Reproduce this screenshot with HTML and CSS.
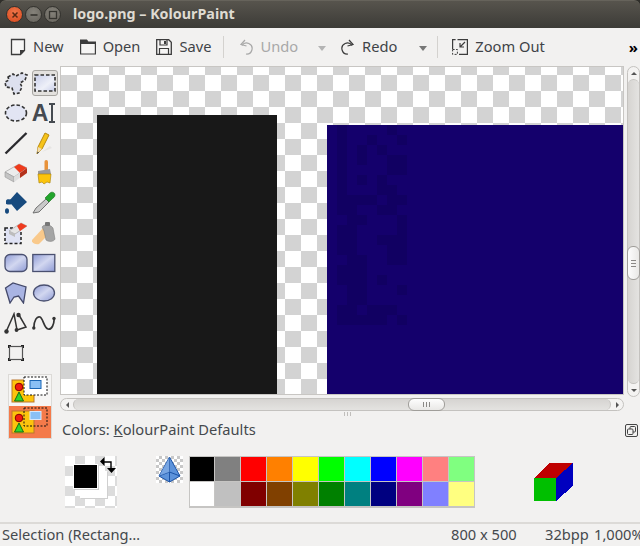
FILE: index.html
```html
<!DOCTYPE html>
<html lang="en">
<head>
<meta charset="utf-8">
<title>logo.png – KolourPaint</title>
<link rel="stylesheet" href="styles.css">
</head>
<body>
<div class="window">
  <header class="titlebar">
    <div class="wm-buttons">
      <span class="wm wm-close"><svg width="10" height="10" viewBox="0 0 10 10"><path d="M2.500 2.500l5 5M7.500 2.500l-5 5" stroke="#5a2a14" stroke-width="1.500"/></svg></span>
      <span class="wm"><svg width="10" height="10" viewBox="0 0 10 10"><path d="M1.500 5h7" stroke="#35342f" stroke-width="1.600"/></svg></span>
      <span class="wm"><svg width="10" height="10" viewBox="0 0 10 10"><rect x="1.500" y="1.500" width="7" height="7" fill="none" stroke="#35342f" stroke-width="1.300"/></svg></span>
    </div>
    <div class="title">logo.png – KolourPaint</div>
  </header>

  <nav class="toolbar">
    <button class="tb tb-new"><svg width="16" height="18" viewBox="0 0 16 18"><path d="M1.500 1.500h13v11l-4 4h-9z" fill="#f6f5f4" stroke="#3c3c3c" stroke-width="1.300"/><path d="M15 12l-5 5v-5z" fill="#3c3c3c"/></svg><span>New</span></button>
    <button class="tb tb-open"><svg width="16" height="16" viewBox="0 0 16 16"><path d="M.6 1h6l1.500 2h7.300v12H.6z" fill="#f6f5f4" stroke="#3c3c3c" stroke-width="1.200"/><path d="M.6 1h6l1.500 2h7.300v2H.6z" fill="#3c3c3c"/></svg><span>Open</span></button>
    <button class="tb tb-save"><svg width="16" height="16" viewBox="0 0 16 16"><path d="M.7.7h12l2.600 2.600v12H.7z" fill="#f6f5f4" stroke="#3c3c3c" stroke-width="1.300"/><path d="M4 1v5h7V1M3.500 15V9.500h9V15" fill="none" stroke="#3c3c3c" stroke-width="1.200"/><rect x="8" y="2" width="2" height="3" fill="#3c3c3c"/></svg><span>Save</span></button>
    <i class="tb-sep tb-sep1"></i>
    <button class="tb tb-undo dim"><svg width="14" height="16" viewBox="0 0 14 16"><path d="M3 6.500A5.500 5.500 0 1 1 7 15" fill="none" stroke="#a8a8a8" stroke-width="1.200"/><path d="M6 1L2 5.500 7.500 7" fill="none" stroke="#a8a8a8" stroke-width="1.200"/></svg><span>Undo</span></button>
    <i class="caret caret-dim caret-undo"></i>
    <button class="tb tb-redo"><svg width="14" height="16" viewBox="0 0 14 16"><path d="M11 6.500A5.500 5.500 0 1 0 7 15" fill="none" stroke="#3c3c3c" stroke-width="1.200"/><path d="M8 1l4 4.500L6.500 7" fill="none" stroke="#3c3c3c" stroke-width="1.200"/></svg><span>Redo</span></button>
    <i class="caret caret-redo"></i>
    <i class="tb-sep tb-sep2"></i>
    <button class="tb tb-zoom"><svg width="16" height="16" viewBox="0 0 16 16"><path d="M5.500.6h9.900v14.800H7M.6 10V.6h3" fill="none" stroke="#3c3c3c" stroke-width="1.200"/><path d="M.6 10.500h4.800v4.900H.6z" fill="none" stroke="#3c3c3c" stroke-dasharray="2 1.500"/><path d="M13 3L8 8M8 4v4h4" fill="none" stroke="#3c3c3c" stroke-width="1.200"/></svg><span>Zoom Out</span></button>
    <span class="more">»</span>
  </nav>

  <main class="workspace">
    <aside class="toolbox">
      <div class="tool"><svg width="24" height="23" viewBox="0 0 24 23"><path d="M4 5l5-3 3 2 6-3 5 2-2 5-5 3 2 4-3 6-5 1-2-6-6-1-1-5 4-2z" fill="#dde0ee" stroke="#333" stroke-width="1.600" stroke-dasharray="3 1.800"/></svg></div>
      <div class="tool is-active"><svg width="22" height="18" viewBox="0 0 22 18"><defs><linearGradient id="g1" x1="0" y1="0" x2="1" y2="1"><stop offset="0" stop-color="#c9cfea"/><stop offset=".6" stop-color="#eef0f8"/><stop offset="1" stop-color="#c9cfea"/></linearGradient></defs><rect x="1" y="1" width="20" height="16" fill="url(#g1)" stroke="#333" stroke-width="1.600" stroke-dasharray="3.500 2"/></svg></div>

      <div class="tool"><svg width="24" height="20" viewBox="0 0 24 20"><ellipse cx="12" cy="10" rx="10.500" ry="8" fill="#e2e5f3" stroke="#333" stroke-width="1.600" stroke-dasharray="3.500 2"/></svg></div>
      <div class="tool tool-text"><span class="glyph-a">A</span><svg width="8" height="20" viewBox="0 0 8 20"><path d="M1 1h6M4 1v18M1 19h6" fill="none" stroke="#454a50" stroke-width="2"/></svg></div>

      <div class="tool"><svg width="24" height="24" viewBox="0 0 24 24"><path d="M1.500 22.500L22.500 2" stroke="#2a2a2e" stroke-width="2.400"/></svg></div>
      <div class="tool"><svg width="20" height="24" viewBox="0 0 20 24"><path d="M18 17l-10 4 8-6z" fill="#e6e5e3"/><path d="M3 23l1-7L11 2l4 2-7 14z" fill="#f6c319" stroke="#b88a10"/><path d="M3 23l1-7 4 2z" fill="#f1dcb2"/><path d="M3 23l.5-2.500 1.500 1z" fill="#333"/></svg></div>

      <div class="tool"><svg width="24" height="20" viewBox="0 0 24 20"><path d="M1 9L15 1l8 4-13 9z" fill="#ececec" stroke="#aaa" stroke-width=".8"/><path d="M10 4l5-3 8 4-7 5z" fill="#ee3b1c"/><path d="M1 9l9 5v5l-9-5z" fill="#c4c4c4" stroke="#999" stroke-width=".6"/><path d="M10 14L23 5v5L10 19z" fill="#dedede"/><path d="M16 10l7-5v5l-7 5z" fill="#b4321c"/></svg></div>
      <div class="tool"><svg width="16" height="26" viewBox="0 0 16 26"><rect x="8.500" y="0" width="3.500" height="11" rx="1.700" fill="#e8923a"/><path d="M2 11l12-2 1 5H2z" fill="#9a9a9a"/><path d="M2 14h13l-1 9-3-1-3 2-2-2-3 1z" fill="#fbc40c" stroke="#a67d06" stroke-width=".6"/></svg></div>

      <div class="tool"><svg width="22" height="22" viewBox="0 0 22 22"><path d="M4 9l8-9 10 10-10 9-5-6c-2-2-2-3-3-4z" fill="#174a7e"/><path d="M8 8C4 7 1 7 1 9v3c3 1 6 1 7-2z" fill="#174a7e"/><ellipse cx="2" cy="19" rx="2" ry="2.800" fill="#174a7e"/></svg></div>
      <div class="tool"><svg width="24" height="24" viewBox="0 0 24 24"><path d="M1 22l3-5L14 8l3 3-10 10z" fill="#c9c9c9" stroke="#666" stroke-width=".9"/><path d="M13 7l4-4c2-3 6-2 6 1 0 2-2 3-3 4l-3 3z" fill="#22a52c" stroke="#15701b" stroke-width=".6"/></svg></div>

      <div class="tool"><svg width="24" height="24" viewBox="0 0 24 24"><rect x="1" y="7" width="16" height="15.500" fill="#dfe2f3" stroke="#222" stroke-width="1.500" stroke-dasharray="3 2"/><path d="M5 10l12-8 6 3-12 8z" fill="#e5e5e5" stroke="#999" stroke-width=".6"/><path d="M13 5l4-3 6 3-7 5z" fill="#ef3b1f"/><path d="M5 10l6 3v3l-6-3z" fill="#bdbdbd"/></svg></div>
      <div class="tool"><svg width="24" height="24" viewBox="0 0 24 24"><path d="M12 6L0 19c-1 3 4 5 7 4l9-9z" fill="#f9c98b"/><path d="M10 6c2-3 8-3 11 1l2 11c-1 3-7 3-9 1L12 10z" fill="#a4a4a4" stroke="#777" stroke-width=".5"/><rect x="13" y="1" width="5" height="4" rx="1" fill="#777"/></svg></div>

      <div class="tool"><svg width="24" height="20" viewBox="0 0 24 20"><defs><linearGradient id="g2" x1="0" y1="0" x2="1" y2="1"><stop offset="0" stop-color="#8e9ad4"/><stop offset=".5" stop-color="#d2d7f0"/><stop offset="1" stop-color="#8e9ad4"/></linearGradient></defs><rect x="1" y="1.500" width="22" height="17" rx="5" fill="url(#g2)" stroke="#4a5070" stroke-width="1.300"/></svg></div>
      <div class="tool"><svg width="24" height="20" viewBox="0 0 24 20"><rect x=".8" y="1.500" width="22" height="17" fill="url(#g2)" stroke="#4a5070" stroke-width="1.300"/></svg></div>

      <div class="tool"><svg width="24" height="22" viewBox="0 0 24 22"><path d="M1.500 6L9 1l13 4-2.500 16-5-7-4.500 1-4 6z" fill="#a9b4e3" stroke="#44496a" stroke-width="1.300"/></svg></div>
      <div class="tool"><svg width="24" height="18" viewBox="0 0 24 18"><ellipse cx="12" cy="9" rx="10.500" ry="8" fill="url(#g2)" stroke="#4a5070" stroke-width="1.300"/></svg></div>

      <div class="tool"><svg width="24" height="22" viewBox="0 0 24 22"><path d="M2 20L10 2l3 16 9-3-7-12" fill="none" stroke="#333" stroke-width="1.500"/><circle cx="2.500" cy="19.500" r="2.200" fill="#333"/><circle cx="12.500" cy="18" r="1.900" fill="#333"/><circle cx="14.500" cy="3" r="2.200" fill="#333"/></svg></div>
      <div class="tool"><svg width="24" height="18" viewBox="0 0 24 18"><path d="M1.800 14C2 6 5 2 8 3s4 11 8 12 6-5 6.200-10" fill="none" stroke="#333" stroke-width="1.700"/><circle cx="1.800" cy="14" r="1.700" fill="#333"/><circle cx="22" cy="4.500" r="1.700" fill="#333"/></svg></div>

      <div class="tool"><svg width="16" height="16" viewBox="0 0 16 16"><rect x="1.500" y="1.500" width="13" height="13" fill="none" stroke="#555" stroke-width="1.200"/><path d="M0 0h3v1H1v2H0zM13 0h3v3h-1V1h-2zM0 13h1v2h2v1H0zM15 13h1v3h-3v-1h2z" fill="#222"/></svg></div>
      <div class="tool"></div>

      <div class="options">
        <div class="opt">
          <svg width="40" height="29" viewBox="0 0 40 29"><rect x="1" y="4" width="22" height="22" fill="#fdc40d" stroke="#b9772d"/><circle cx="8" cy="11" r="3.800" fill="#f01c10" stroke="#800"/><path d="M8 16l4.500 9h-9z" fill="#32d72c" stroke="#176b14"/><rect x="13" y="1" width="23" height="18" fill="#fff"/><rect x="13" y="1" width="23" height="18" fill="none" stroke="#111" stroke-dasharray="2 1.500"/><rect x="19" y="4.500" width="11" height="8" fill="#8ac0f5" stroke="#1a66b5"/></svg>
        </div>
        <div class="opt opt-on">
          <svg width="40" height="29" viewBox="0 0 40 29"><rect x="1" y="4" width="22" height="22" fill="#fdc40d" stroke="#b9772d"/><circle cx="8" cy="11" r="3.800" fill="#f01c10" stroke="#800"/><path d="M8 16l4.500 9h-9z" fill="#32d72c" stroke="#176b14"/><rect x="13" y="1" width="23" height="18" fill="none" stroke="#111" stroke-dasharray="2 1.500"/><rect x="19" y="4.500" width="11" height="8" fill="#8ac0f5" stroke="#d9e8fa"/></svg>
        </div>
      </div>
    </aside>

    <section class="viewport">
      <div class="viewport-row">
        <div class="canvas">
          <div class="img-black"></div>
          <div class="img-blue">
            <svg width="297" height="269" viewBox="0 0 29.700 26.900" shape-rendering="crispEdges"><path fill="#110062" d="M1 0h1v7H1zM6 0h1v1H6zM4 1h1v1H4zM7 1h1v1H7zM3 2h1v2H3zM5 2h1v1H5zM6 3h2v2H6zM3 5h1v1H3zM5 5h1v1H5zM5 6h2v1H5zM1 7h4v1H1zM6 7h2v1H6zM1 8h2v1H1zM5 8h2v1H5zM2 9h2v1H2zM7 9h1v1H7zM1 10h2v1H1zM7 10h1v1H7zM1 11h2v1H1zM5 11h3v1H5zM1 12h2v1H1zM6 12h2v2H6zM2 13h2v1H2zM1 14h3v2H1zM5 15h1v1H5zM2 16h2v2H2zM7 16h1v1H7zM1 18h2v1H1zM4 18h3v1H4zM1 19h5v1H1zM7 19h1v1H7z"/></svg>
          </div>
        </div>
        <div class="vscroll">
          <span class="arrow-btn"><i class="tri-up"></i></span>
          <div class="vtrack"><div class="vthumb"><i></i><i></i><i></i></div></div>
          <span class="arrow-btn arrow-btn-down"><i class="tri-down"></i></span>
        </div>
      </div>
      <div class="hscroll">
        <span class="harrow"><i class="tri-left"></i></span>
        <div class="htrack"><div class="hthumb"><i></i><i></i><i></i></div></div>
        <span class="harrow harrow-r"><i class="tri-right"></i></span>
      </div>
      <div class="grip"><i></i><i></i><i></i></div>
    </section>
  </main>

  <section class="colors">
    <div class="colors-head">
      <span class="colors-label">Colors: <u>K</u>olourPaint Defaults</span>
      <svg class="dock" width="13" height="13" viewBox="0 0 13 13"><rect x=".5" y=".5" width="12" height="12" rx="1.500" fill="none" stroke="#444"/><rect x="5" y="2.500" width="5.500" height="5.500" rx="1" fill="none" stroke="#444"/><rect x="2.500" y="5" width="5.500" height="5.500" rx="1" fill="#f2f1f0" stroke="#444"/></svg>
    </div>
    <div class="colors-body">
      <div class="fgbg">
        <div class="bg-swatch"></div>
        <div class="fg-swatch"></div>
        <svg class="swap" width="16" height="17" viewBox="0 0 16 17"><path d="M3 5h8v7" fill="none" stroke="#000" stroke-width="1.400"/><path d="M0 4.500L4.500 0v9zM7 11h9l-4.500 5z" fill="#000"/></svg>
      </div>
      <div class="cone">
        <svg width="27" height="27" viewBox="0 0 27 27"><path d="M13.500 1L3 20l10.500 6L24 20z" fill="#5d93db" stroke="#1b53a7"/><path d="M13.500 1v25M3 20l10.500-4 10.500 4" fill="none" stroke="#1b53a7"/><path d="M13.500 1L3 20l10.500-4z" fill="#8ab2e8" opacity=".6"/></svg>
      </div>
      <div class="palette">
        <i style="background:#000000"></i><i style="background:#808080"></i><i style="background:#ff0000"></i><i style="background:#ff8000"></i><i style="background:#ffff00"></i><i style="background:#00ff00"></i><i style="background:#00ffff"></i><i style="background:#0000ff"></i><i style="background:#ff00ff"></i><i style="background:#ff8080"></i><i style="background:#80ff80"></i>
        <i style="background:#ffffff"></i><i style="background:#c0c0c0"></i><i style="background:#800000"></i><i style="background:#804000"></i><i style="background:#808000"></i><i style="background:#008000"></i><i style="background:#008080"></i><i style="background:#000080"></i><i style="background:#800080"></i><i style="background:#8080ff"></i><i style="background:#ffff80"></i>
      </div>
      <svg class="cube" width="39" height="39" viewBox="0 0 39 39" shape-rendering="crispEdges"><path d="M15 0h24L22 15H0z" fill="#bf0000"/><path d="M0 15h22v23H0z" fill="#00bf00"/><path d="M22 15L39 0v23L22 38z" fill="#0000bf"/></svg>
    </div>
  </section>

  <footer class="status">
    <span class="st-msg">Selection (Rectang…</span>
    <span class="st-size">800 x 500</span>
    <span class="st-bpp">32bpp</span>
    <span class="st-zoom">1,000%</span>
  </footer>
</div>
</body>
</html>
```

FILE: styles.css
```css
* { box-sizing: border-box; }
html, body { margin: 0; padding: 0; height: 100%; background: #f2f1f0; overflow: hidden; }
body { font-family: "Noto Sans", "Open Sans", sans-serif; font-size: 14.67px; color: #3c3c3c; }
.window { width: 640px; height: 546px; display: flex; flex-direction: column; overflow: hidden; background: #2f2e2a; }

.titlebar { height: 28px; flex: none; display: flex; align-items: center; padding-left: 6px; background: linear-gradient(#57544d, #3c3b37); border-radius: 6px 6px 0 0; border-top: 1px solid #66635b; }
.wm-buttons { display: flex; gap: 2px; }
.wm { width: 17px; height: 17px; border-radius: 50%; background: radial-gradient(circle at 50% 35%, #85827a, #65625b); border: 1px solid #33322e; display: flex; align-items: center; justify-content: center; }
.wm-close { background: radial-gradient(circle at 50% 35%, #f0764a, #d8481c); }
.title { margin-left: 12px; padding-bottom: 2px; color: #dfdbd2; font-weight: 700; font-size: 14.3px; white-space: nowrap; }

.toolbar { height: 38px; flex: none; background: #f2f1f0; display: flex; align-items: center; padding-left: 10px; }
.tb { border: 0; background: none; padding: 0; font: inherit; color: #3f4347; display: flex; align-items: center; gap: 7px; }
.tb span { padding-bottom: 2px; }
.tb-open { margin-left: 16px; }
.tb-save { margin-left: 16px; }
.tb-sep { width: 1px; height: 22px; background: #d4d2cf; flex: none; }
.tb-sep1 { margin-left: 12px; }
.tb-undo { margin-left: 15px; }
.dim { color: #a8a8a8; }
.caret { width: 0; height: 0; border-left: 4px solid transparent; border-right: 4px solid transparent; border-top: 5px solid #777; margin-top: 2px; flex: none; }
.caret-dim { border-top-color: #b4b4b4; margin-left: 20px; }
.tb-redo { margin-left: 15px; }
.caret-redo { margin-left: 22px; }
.tb-sep2 { margin-left: 10px; }
.tb-zoom { margin-left: 14px; }
.more { margin-left: auto; margin-right: 2px; font-size: 15px; font-weight: 700; color: #000; line-height: 1; }

.workspace { flex: none; height: 356px; display: flex; background: #f2f1f0; }
.toolbox { width: 60px; flex: none; position: relative; z-index: 1; display: grid; grid-template-columns: 28px 28px; grid-auto-rows: 30px; padding: 2px 0 0 2px; align-content: start; }
.tool { width: 28px; height: 30px; display: flex; align-items: center; justify-content: center; }
.is-active { width: 26px; height: 26px; margin: 2px 0 0 2px; background: #e3e1de; border: 1px solid #a8a6a2; border-radius: 3px; }
.glyph-a { font-family: "Liberation Sans", sans-serif; font-weight: 700; font-size: 23px; color: #454a50; line-height: 1; }
.options { grid-column: 1 / 3; width: 44px; height: 65px; margin: 6px 0 0 6px; border: 1px solid #dcdad7; background: #f6f5f4; }
.opt { height: 31px; padding: 1px 0 0 2px; }
.opt-on { height: 32px; background: #f47a4a; }

.viewport { width: 580px; flex: none; display: flex; flex-direction: column; }
.viewport-row { display: flex; height: 329px; align-items: flex-start; }
.canvas { width: 564px; height: 329px; flex: none; position: relative; border: 1px solid #c8c6c3; background-color: #fff; background-image: repeating-conic-gradient(#d3d3d3 0 25%, #fff 0 50%); background-size: 32px 32px; background-position: 0 -8px; overflow: hidden; }
.img-black { position: absolute; left: 36px; top: 48px; width: 180px; height: 290px; background: #181818; }
.img-blue { position: absolute; left: 266px; top: 58px; width: 297px; height: 280px; background: #14006c; }
.img-blue svg { display: block; }

.vscroll { width: 13px; flex: none; margin-left: 3px; height: 331px; display: flex; flex-direction: column; align-items: center; border: 1px solid #c4c2bf; border-radius: 7px; background: #f4f3f2; }
.arrow-btn { height: 12px; width: 100%; flex: none; display: flex; align-items: center; justify-content: center; }
.tri-up, .tri-down, .tri-left, .tri-right { display: block; width: 0; height: 0; }
.tri-up { border-left: 3px solid transparent; border-right: 3px solid transparent; border-bottom: 3px solid #555; }
.tri-down { border-left: 3px solid transparent; border-right: 3px solid transparent; border-top: 3px solid #555; }
.vtrack { flex: 1; width: 100%; background: linear-gradient(90deg, #d6d4d1, #e4e3e1); border-radius: 6px; border: 1px solid #c4c2bf; border-width: 1px 0; padding-top: 166px; }
.vthumb { height: 34px; width: 13px; background: linear-gradient(90deg, #fdfdfd, #e9e8e6); border: 1px solid #a09e9a; border-radius: 6px; display: flex; flex-direction: column; gap: 2px; align-items: center; justify-content: center; margin: 0 -1px; }
.vthumb i { display: block; width: 5px; height: 1px; background: #8a8885; }

.hscroll { width: 564px; height: 13px; margin-top: 3px; display: flex; align-items: center; border: 1px solid #c4c2bf; border-radius: 7px; background: #f4f3f2; }
.harrow { width: 12px; height: 100%; flex: none; display: flex; align-items: center; justify-content: center; }
.tri-left { border-top: 3px solid transparent; border-bottom: 3px solid transparent; border-right: 3px solid #555; }
.tri-right { border-top: 3px solid transparent; border-bottom: 3px solid transparent; border-left: 3px solid #555; }
.htrack { flex: 1; height: 100%; background: linear-gradient(#d6d4d1, #e4e3e1); border-radius: 6px; border: 1px solid #c4c2bf; border-width: 0 1px; padding-left: 334px; }
.hthumb { width: 37px; height: 13px; margin-top: -1px; background: linear-gradient(#fdfdfd, #e9e8e6); border: 1px solid #a09e9a; border-radius: 6px; display: flex; gap: 2px; align-items: center; justify-content: center; }
.hthumb i { display: block; width: 1px; height: 5px; background: #8a8885; }
.grip { display: flex; gap: 2px; justify-content: center; margin-top: 1px; margin-left: -6px; }
.grip i { display: block; width: 1px; height: 4px; background: #c0bebb; }

.colors { flex: none; height: 100px; background: #f2f1f0; }
.colors-head { height: 34px; display: flex; align-items: flex-start; justify-content: space-between; padding: 0 2px 0 62px; }
.colors-label { color: #45494d; white-space: nowrap; line-height: 14px; }
.dock { margin-top: 2px; }
.colors-body { display: flex; align-items: flex-start; padding: 0 0 0 65px; }
.fgbg { width: 52px; height: 52px; flex: none; position: relative; background-color: #fff; background-image: repeating-conic-gradient(#dcdcdc 0 25%, #fff 0 50%); background-size: 20px 20px; }
.bg-swatch { position: absolute; left: 15px; top: 15px; width: 27px; height: 27px; background: #fff; box-shadow: 1px 1px 0 #d0d0d0; }
.fg-swatch { position: absolute; left: 8px; top: 8px; width: 25px; height: 25px; background: #000; border: 1px solid #fff; box-shadow: 1px 1px 0 #d0d0d0; }
.swap { position: absolute; right: 1px; top: 1px; }
.cone { width: 27px; height: 27px; flex: none; margin-left: 39px; background-image: repeating-conic-gradient(#c8c8c8 0 25%, #fff 0 50%); background-size: 6px 6px; }
.palette { width: 286px; height: 52px; flex: none; margin-left: 6px; display: grid; grid-template-columns: 25px repeat(10, 26px); grid-auto-rows: 25px; background: #c6c5c3; padding: 1px 0 0 1px; }
.palette i { display: block; margin: 0 1px 1px 0; }
.cube { margin: 7px 0 0 59px; flex: none; }

.status { flex: none; height: 24px; background: #f2f1f0; border-top: 2px solid #dcdad7; display: flex; align-items: center; padding: 0 0 2px 2px; color: #45494d; white-space: nowrap; }
.st-msg { width: 449px; flex: none; }
.st-size { width: 94px; flex: none; }
.st-bpp { width: 49px; flex: none; }
```
